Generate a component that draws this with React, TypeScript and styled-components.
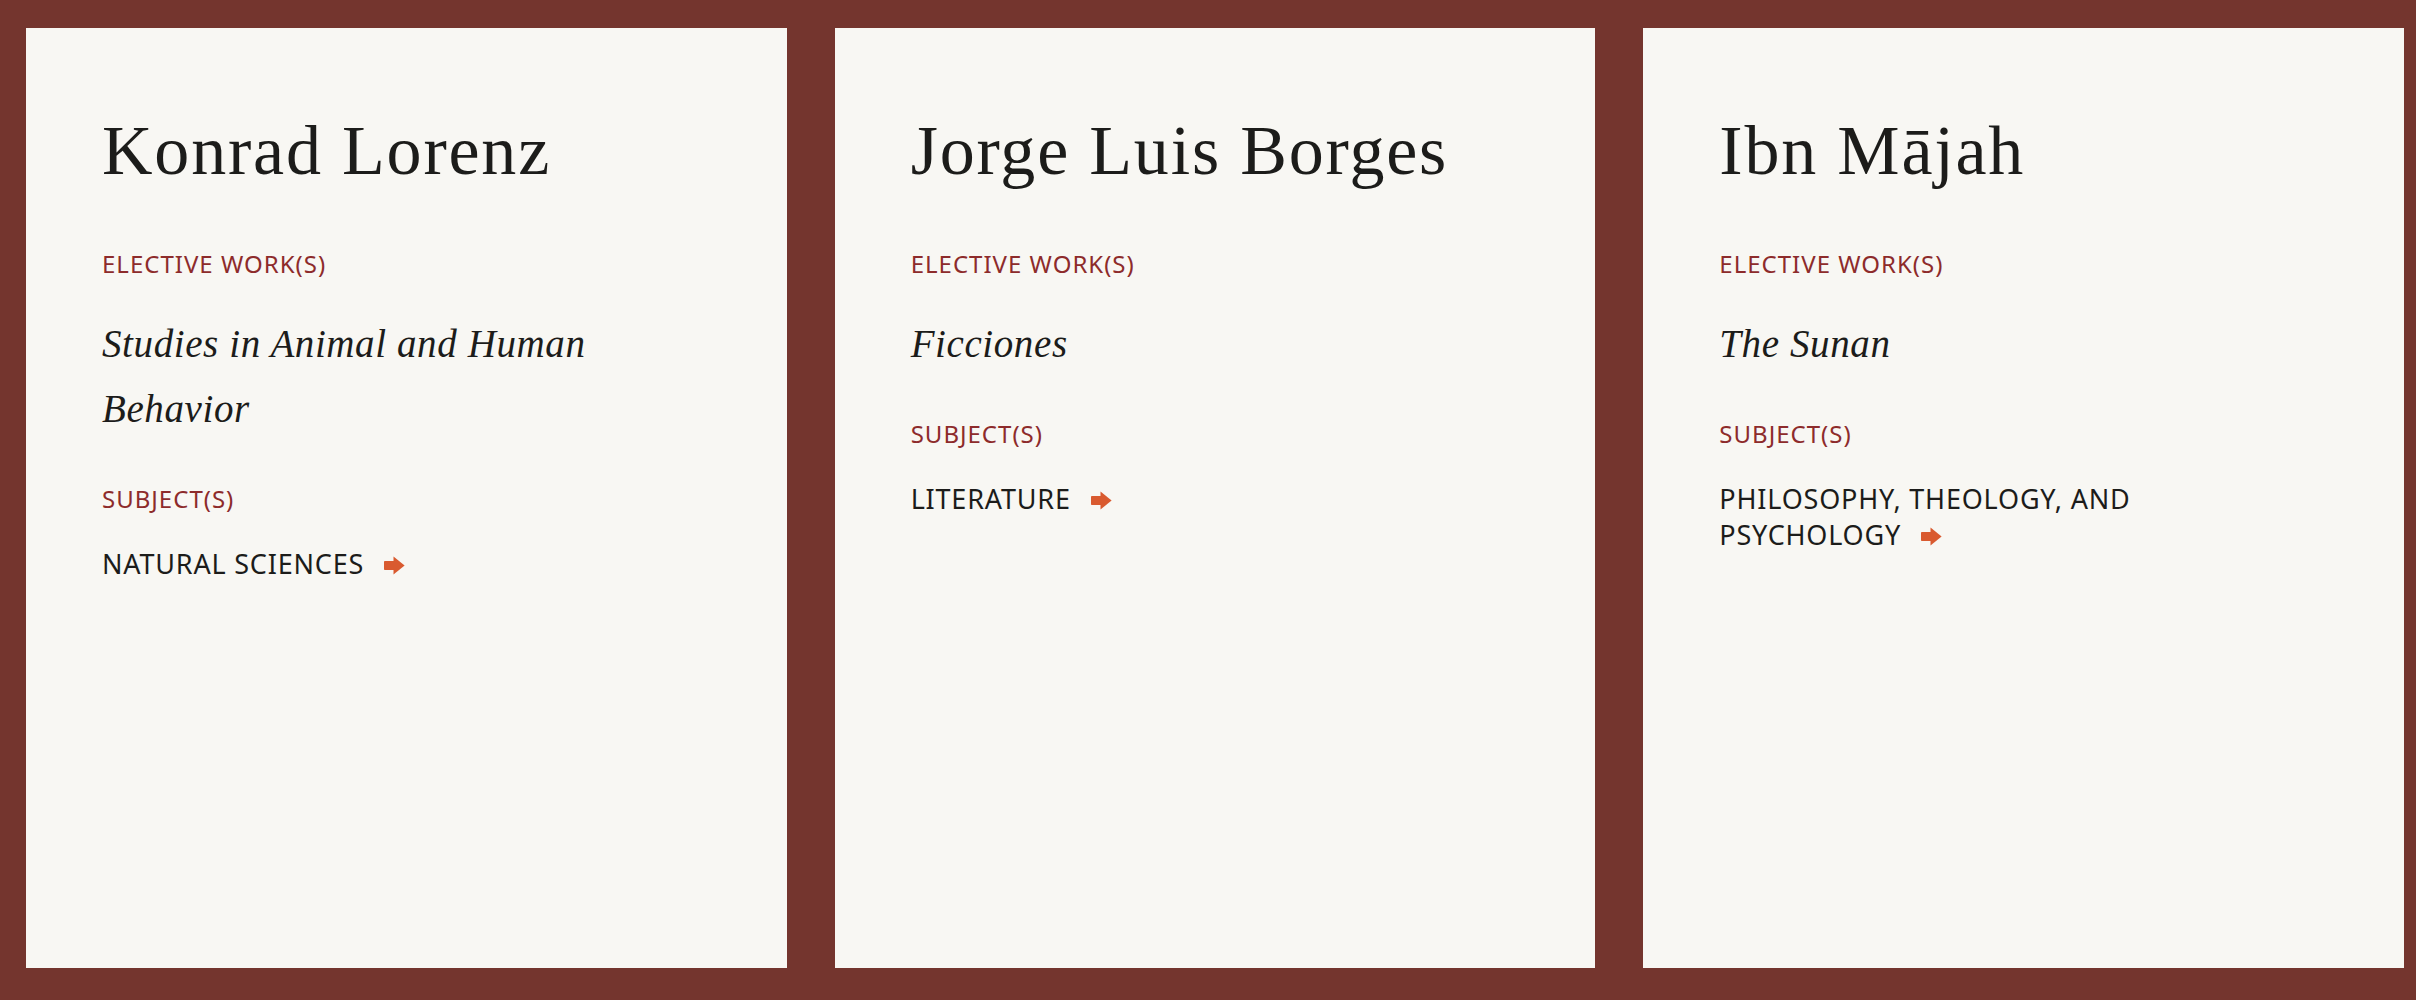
import React from "react";
import styled, { createGlobalStyle } from "styled-components";

const GlobalStyle = createGlobalStyle`
  *, *::before, *::after { box-sizing: border-box; }
  html, body { margin: 0; padding: 0; background: #74352e; }
  body { font-family: "Noto Sans", sans-serif; }
`;

const Page = styled.main`
  height: 1000px;
  padding: 28px 12px 32px 26px;
  display: grid;
  grid-template-columns: repeat(3, 1fr);
  column-gap: 48px;
  background: #74352e;
`;

const Card = styled.article`
  background: #f8f7f3;
  padding: 81px 76px 40px 76px;
  display: flex;
  flex-direction: column;
  align-items: flex-start;
`;

const Content = styled.div`
  max-width: 560px;
  display: flex;
  flex-direction: column;
`;

const Name = styled.h2`
  margin: 0;
  font-family: "Liberation Serif", "Times New Roman", serif;
  font-weight: 400;
  font-size: 70px;
  line-height: 84px;
  letter-spacing: 1.8px;
  color: #1c1c1a;
`;

const Label = styled.div<{ $gap: number }>`
  margin-top: ${(p) => p.$gap}px;
  font-family: "Noto Sans", sans-serif;
  font-size: 24px;
  line-height: 28.8px;
  letter-spacing: 1px;
  text-transform: uppercase;
  color: #8d2b2b;
`;

const Work = styled.div`
  margin-top: 32px;
  font-family: "Liberation Serif", "Times New Roman", serif;
  font-style: italic;
  font-size: 39px;
  line-height: 65px;
  letter-spacing: 0.6px;
  color: #1c1c1a;
`;

const Subject = styled.a`
  margin-top: 32px;
  display: block;
  font-family: "Noto Sans", sans-serif;
  font-size: 27px;
  line-height: 36px;
  letter-spacing: 0.8px;
  text-transform: uppercase;
  color: #1c1c1a;
  text-decoration: none;
`;

const NoWrap = styled.span`
  white-space: nowrap;
`;

const ArrowIcon = styled.svg`
  display: inline-block;
  width: 21px;
  height: 19px;
  margin-left: 20px;
  vertical-align: -1px;
  fill: #d95a2f;
`;

function Arrow() {
  return (
    <ArrowIcon viewBox="0 0 21 19" aria-hidden="true">
      <rect x="0" y="5" width="11" height="9" rx="0.8" />
      <path d="M9.5 0.6 L20.6 9.5 L9.5 18.4 Z" strokeLinejoin="round" />
    </ArrowIcon>
  );
}

type Person = { name: string; work: string; subject: string };

const people: Person[] = [
  { name: "Konrad Lorenz", work: "Studies in Animal and Human Behavior", subject: "Natural Sciences" },
  { name: "Jorge Luis Borges", work: "Ficciones", subject: "Literature" },
  { name: "Ibn Mājah", work: "The Sunan", subject: "Philosophy, Theology, and Psychology" },
];

function SubjectLink({ text }: { text: string }) {
  const words = text.split(" ");
  const last = words.pop();
  const head = words.length ? words.join(" ") + " " : "";
  return (
    <Subject href="#">
      {head}
      <NoWrap>
        {last}
        <Arrow />
      </NoWrap>
    </Subject>
  );
}

export default function App() {
  return (
    <>
      <GlobalStyle />
      <Page>
        {people.map((p) => (
          <Card key={p.name}>
            <Content>
              <Name>{p.name}</Name>
              <Label $gap={57}>Elective Work(s)</Label>
              <Work>{p.work}</Work>
              <Label $gap={44}>Subject(s)</Label>
              <SubjectLink text={p.subject} />
            </Content>
          </Card>
        ))}
      </Page>
    </>
  );
}
